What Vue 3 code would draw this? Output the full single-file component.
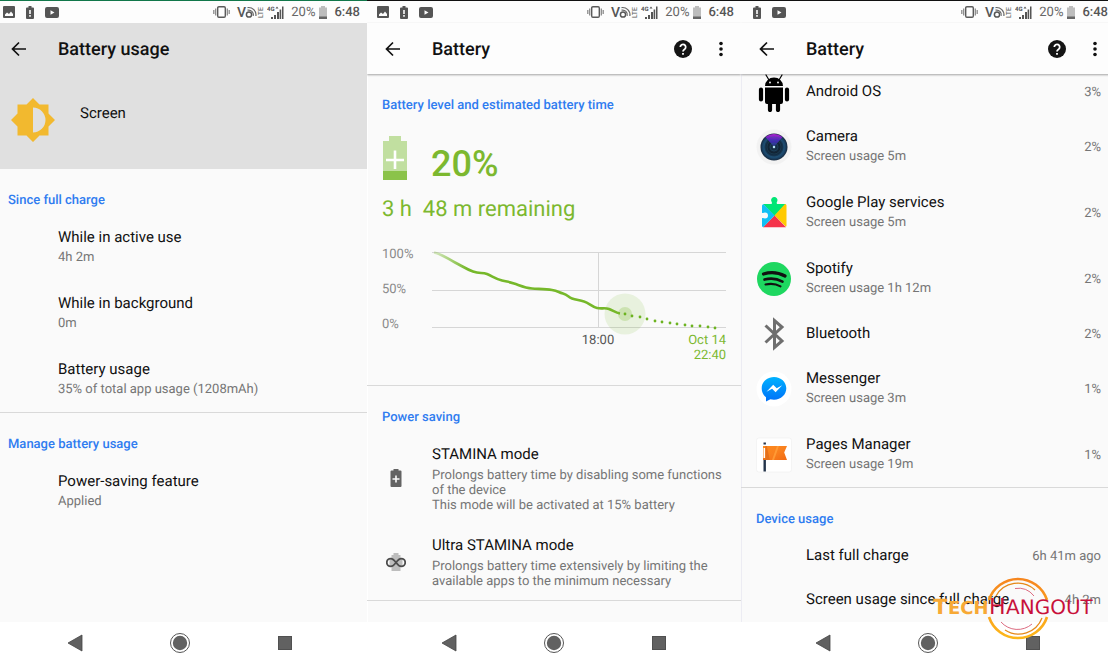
<script setup>
const usageStats = [
  { title: 'While in active use', sub: '4h 2m' },
  { title: 'While in background', sub: '0m' },
  { title: 'Battery usage', sub: '35% of total app usage (1208mAh)' },
]

const modes = [
  {
    title: 'STAMINA mode',
    icon: 'i-stamina',
    lines: ['Prolongs battery time by disabling some functions of the device', 'This mode will be activated at 15% battery'],
  },
  {
    title: 'Ultra STAMINA mode',
    icon: 'i-ultra',
    lines: ['Prolongs battery time extensively by limiting the available apps to the minimum necessary'],
  },
]

const apps = [
  { name: 'Android OS', icon: 'i-android', pct: '3%' },
  { name: 'Camera', sub: 'Screen usage 5m', icon: 'i-camera', pct: '2%' },
  { name: 'Google Play services', sub: 'Screen usage 5m', icon: 'i-play', pct: '2%' },
  { name: 'Spotify', sub: 'Screen usage 1h 12m', icon: 'i-spotify', pct: '2%' },
  { name: 'Bluetooth', icon: 'i-bluetooth', pct: '2%' },
  { name: 'Messenger', sub: 'Screen usage 3m', icon: 'i-messenger', pct: '1%' },
  { name: 'Pages Manager', sub: 'Screen usage 19m', icon: 'i-pages', pct: '1%' },
]

const device = [
  { name: 'Last full charge', value: '6h 41m ago' },
  { name: 'Screen usage since full charge', value: '4h 2m' },
]

const phones = [
  { id: 'usage', title: 'Battery usage', gallery: true, actions: false },
  { id: 'battery', title: 'Battery', gallery: true, actions: true },
  { id: 'apps', title: 'Battery', gallery: false, actions: true },
]

const forecast = [
  [243, 70], [250, 72], [258, 73], [265, 75], [273, 77], [280, 78], [288, 79],
  [295, 80], [303, 81], [310, 82], [318, 82], [326, 83], [333, 84],
]
</script>

<template>
  <svg class="sprite" aria-hidden="true">
    <defs>
      <radialGradient id="lens" cx="50%" cy="50%" r="50%">
        <stop offset="0" stop-color="#9fd4ee" />
        <stop offset=".12" stop-color="#17324a" />
        <stop offset=".5" stop-color="#10202f" />
        <stop offset=".8" stop-color="#1b4a70" />
        <stop offset="1" stop-color="#16283c" />
      </radialGradient>
      <linearGradient id="flare" x1="0" y1="0" x2="0" y2="1">
        <stop offset="0" stop-color="#b01fd0" />
        <stop offset=".5" stop-color="#4526b8" />
        <stop offset="1" stop-color="#1c3f78" />
      </linearGradient>
      <linearGradient id="msg" x1="0" y1="0" x2="0" y2="1">
        <stop offset="0" stop-color="#00b2ff" />
        <stop offset="1" stop-color="#0070f8" />
      </linearGradient>
      <linearGradient id="flag" x1="0" y1="0" x2="1" y2="1">
        <stop offset="0" stop-color="#ff8a1c" />
        <stop offset=".5" stop-color="#f9811f" />
        <stop offset="1" stop-color="#f26a12" />
      </linearGradient>
    </defs>

    <symbol id="i-gallery" viewBox="0 0 12 12">
      <path fill="#555" fill-rule="evenodd" d="M1 0h10a1 1 0 0 1 1 1v10a1 1 0 0 1-1 1H1a1 1 0 0 1-1-1V1a1 1 0 0 1 1-1zM2 10h8V8L8 5.500 6 8 4 6.500 2 8.500z" />
    </symbol>
    <symbol id="i-alert" viewBox="0 0 8 13">
      <path fill="#555" fill-rule="evenodd" d="M2.500 0h3v1.500H7a1 1 0 0 1 1 1V12a1 1 0 0 1-1 1H1a1 1 0 0 1-1-1V2.500a1 1 0 0 1 1-1h1.500zM3.200 4v4h1.600V4zM3.200 9v1.700h1.600V9z" />
    </symbol>
    <symbol id="i-video" viewBox="0 0 14 11">
      <path fill="#555" fill-rule="evenodd" d="M2 0h10a2 2 0 0 1 2 2v7a2 2 0 0 1-2 2H2a2 2 0 0 1-2-2V2a2 2 0 0 1 2-2zM5.500 3.200v4.600l4-2.300z" />
    </symbol>
    <symbol id="i-vibrate" viewBox="0 0 17 12">
      <rect x="4.700" y="0.700" width="7.600" height="10.600" rx="1.200" fill="none" stroke="#5a5a5a" stroke-width="1.400" />
      <path d="M2.700 2.500v7M14.300 2.500v7M.8 4v4M16.200 4v4" stroke="#8a8a8a" stroke-width="1.300" />
    </symbol>
    <symbol id="i-cell" viewBox="0 0 8 13">
      <path fill="#bdbdbd" d="M2 0h4v1.500h2V13H0V1.500h2z" />
      <path fill="#666" d="M0 10.500h8V13H0z" />
    </symbol>
    <symbol id="i-back" viewBox="0 0 16 16">
      <path d="M15 8H2M8 1.500L1.500 8 8 14.500" fill="none" stroke="#111" stroke-width="1.700" />
    </symbol>
    <symbol id="i-help" viewBox="0 0 18 18">
      <circle cx="9" cy="9" r="9" fill="#151515" />
      <path d="M6.300 7a2.700 2.700 0 1 1 4.300 2.200C9.500 10 9 10.400 9 11.600" fill="none" stroke="#fff" stroke-width="1.800" />
      <path d="M8.100 13h1.800v1.800H8.100z" fill="#fff" />
    </symbol>
    <symbol id="i-more" viewBox="0 0 4 16">
      <circle cx="2" cy="2.500" r="1.800" fill="#111" /><circle cx="2" cy="8" r="1.800" fill="#111" /><circle cx="2" cy="13.500" r="1.800" fill="#111" />
    </symbol>
    <symbol id="i-brightness" viewBox="0 0 44 44">
      <path fill="#f2b92f" fill-rule="evenodd" d="M22 0l6.500 6.500h9v9L44 22l-6.500 6.500v9h-9L22 44l-6.500-6.500h-9v-9L0 22l6.500-6.500v-9h9zM22 9.500v25a12.500 12.500 0 0 0 0-25z" />
    </symbol>
    <symbol id="i-stamina" viewBox="0 0 20 20">
      <path fill="#636363" fill-rule="evenodd" d="M7.500 1h5v1.500h2a1 1 0 0 1 1 1V18a1 1 0 0 1-1 1h-9a1 1 0 0 1-1-1V3.500a1 1 0 0 1 1-1h2zM9.200 7.500v2.700H6.500v1.600h2.700v2.700h1.600v-2.700h2.700v-1.600h-2.700V7.500z" />
    </symbol>
    <symbol id="i-ultra" viewBox="0 0 20 20">
      <path fill="#bdbdbd" d="M7.500 1h5v2h2v2.500l2 1.500v8h-2v4h-9v-4h-2V7l2-1.500V3h2z" />
      <path d="M10 10.500C8.500 8.400 7 6.600 4.700 6.600a3.900 3.900 0 0 0 0 7.800c2.300 0 3.800-1.800 5.300-3.900s3-3.900 5.300-3.900a3.900 3.900 0 0 1 0 7.800c-2.300 0-3.800-1.800-5.300-3.900z" fill="none" stroke="#4c4c4c" stroke-width="1.800" />
    </symbol>

    <symbol id="i-android" viewBox="0 0 36 40">
      <path d="M10 3l3 5M26 3l-3 5" stroke="#000" stroke-width="1.200" stroke-linecap="round" />
      <path d="M9 14a9 8.500 0 0 1 18 0zM9 15.500h18V30a2 2 0 0 1-2 2H11a2 2 0 0 1-2-2z" />
      <path d="M5 17.500v10M31 17.500v10M14 31v7M22 31v7" stroke="#000" stroke-width="4.200" stroke-linecap="round" />
      <circle cx="14" cy="10.500" r=".9" fill="#fff" /><circle cx="22" cy="10.500" r=".9" fill="#fff" />
    </symbol>
    <symbol id="i-camera" viewBox="0 0 36 36">
      <circle cx="18" cy="18" r="17.500" fill="#f2f2f2" />
      <circle cx="18" cy="18" r="13.500" fill="url(#lens)" />
      <path d="M18 18L9.500 8a13.500 13.500 0 0 1 17 0z" fill="url(#flare)" />
      <g fill="none" stroke="#2e6486" stroke-opacity=".6" stroke-width=".6"><circle cx="18" cy="18" r="4" /><circle cx="18" cy="18" r="7" /><circle cx="18" cy="18" r="10" /></g>
      <circle cx="18" cy="18" r="1.200" fill="#b9e4f5" />
    </symbol>
    <symbol id="i-play" viewBox="0 0 36 36">
      <path fill="#00e676" d="M7 9h8.500c1-1 .2-2-.3-3a3.200 3.200 0 1 1 6.200 0c-.5 1-1.200 2-.3 3H30L18.500 21z" />
      <path fill="#ffca00" d="M29 9a1.500 1.500 0 0 1 1.500 1.500v20a1.500 1.500 0 0 1-.6 1.200L18.500 20.500z" />
      <path fill="#f5334a" d="M18.500 20.500L30 32.300H7z" />
      <path fill="#12bff5" d="M7.500 9.200L18.500 20.500 7.200 32.300a1.500 1.500 0 0 1-1.200-1.500v-7.500c1-.8 2 0 3 .2a3 3 0 1 0 0-6c-1 .2-2 1-3 .2v-7A1.500 1.500 0 0 1 7.500 9.200z" />
    </symbol>
    <symbol id="i-spotify" viewBox="0 0 36 36">
      <circle cx="18" cy="18" r="17" fill="#1ed760" />
      <path d="M7.500 13c7-2.200 15-1.500 21.500 2" fill="none" stroke="#111" stroke-width="3.200" stroke-linecap="round" />
      <path d="M8.500 18.600c6-1.700 12.500-1 18 2" fill="none" stroke="#111" stroke-width="2.600" stroke-linecap="round" />
      <path d="M9.500 23.500c5-1.200 10.500-.7 15 1.800" fill="none" stroke="#111" stroke-width="2.100" stroke-linecap="round" />
    </symbol>
    <symbol id="i-bluetooth" viewBox="0 0 36 36">
      <path d="M9.500 9.500L26 25 18.500 31.500V4.500L26 11 9.500 26.500" fill="none" stroke="#6e6e6e" stroke-width="3" />
    </symbol>
    <symbol id="i-messenger" viewBox="0 0 36 36">
      <circle cx="18" cy="18" r="17.500" fill="#fff" />
      <path fill="url(#msg)" d="M18 6c7 0 12.300 5 12.300 11.300S25 28.800 18 28.800c-1.300 0-2.500-.2-3.600-.5L10 30.500v-4.200c-2.700-2-4.300-5.200-4.300-9C5.700 11 11 6 18 6z" />
      <path fill="#fff" d="M10.500 20.800l6.700-7 3.500 3.400 5.500-3-6.600 7-3.500-3.400z" />
    </symbol>
    <symbol id="i-pages" viewBox="0 0 36 36">
      <rect x=".5" y="1" width="35" height="34" rx="2.500" fill="#fff" stroke="#eee" stroke-width=".6" />
      <path fill="#24344a" d="M7.500 5.500h2.400v2H7.500zM7.500 9.500h2.400V34.500H7.500z" />
      <path fill="url(#flag)" d="M7 9h24l-2.800 6.500L31 23H7z" />
      <path fill="#fff" d="M7.500 11h1.800v10H7.500z" />
      <path fill="#e5701a" d="M9.300 9h1.500l3 14H7v-1.500h2.300z" />
      <path fill="#ff9a35" d="M16 23l5-14h2l-5 14z" />
    </symbol>
  </svg>

  <main class="board">
    <section v-for="phone in phones" :key="phone.id" class="frame" :class="phone.id">
      <div class="phone">
        <div class="status">
          <div class="notes">
            <svg v-if="phone.gallery" class="s-gallery"><use href="#i-gallery" /></svg>
            <svg class="s-cell"><use href="#i-alert" /></svg>
            <svg class="s-video"><use href="#i-video" /></svg>
          </div>
          <div class="system">
            <svg class="s-vibrate"><use href="#i-vibrate" /></svg>
            <svg class="s-volte" viewBox="0 0 28 16">
              <text x="0" y="13" font-size="14" font-weight="500" fill="#555">V</text>
              <circle cx="12" cy="10.500" r="2.600" fill="none" stroke="#555" stroke-width="1.500" />
              <path d="M10.500 6.200a4.700 4.700 0 0 1 5.700 5.600M10.500 3.600a7.400 7.400 0 0 1 8.400 8.400" fill="none" stroke="#666" stroke-width="1.200" />
              <text x="-14" y="26" transform="rotate(-90)" font-size="7" fill="#555">LTE</text>
            </svg>
            <svg class="s-signal" viewBox="0 0 17 15">
              <text x="0" y="6" font-size="6" fill="#555" font-weight="700">4G</text>
              <path fill="#555" d="M8.500 3.500l1.500-2 1.500 2zM4 12h2v2H4zM7 10h2v4H7zM10 7h2v7h-2zM12.600 4.500h1.600V14h-1.600zM15 1.500h1.500V14H15z" />
            </svg>
            <span class="level">20%</span>
            <svg class="s-cell"><use href="#i-cell" /></svg>
            <span class="clock">6:48</span>
          </div>
        </div>

        <header class="appbar">
          <button type="button" class="icon-btn" aria-label="Back"><svg class="a-back"><use href="#i-back" /></svg></button>
          <h1>{{ phone.title }}</h1>
          <template v-if="phone.actions">
            <button type="button" class="icon-btn help" aria-label="Help"><svg class="a-help"><use href="#i-help" /></svg></button>
            <button type="button" class="icon-btn" aria-label="More options"><svg class="a-more"><use href="#i-more" /></svg></button>
          </template>
        </header>

        <div v-if="phone.id === 'usage'" class="content">
          <div class="subject">
            <svg><use href="#i-brightness" /></svg>
            <span class="title">Screen</span>
          </div>
          <h2>Since full charge</h2>
          <ul>
            <li v-for="s in usageStats" :key="s.title" class="row indent">
              <div class="text"><span class="title">{{ s.title }}</span><span class="sub">{{ s.sub }}</span></div>
            </li>
          </ul>
          <div class="divided">
            <h2>Manage battery usage</h2>
            <div class="row indent">
              <div class="text"><span class="title">Power-saving feature</span><span class="sub">Applied</span></div>
            </div>
          </div>
        </div>

        <div v-else-if="phone.id === 'battery'" class="content">
          <h2>Battery level and estimated battery time</h2>
          <div class="hero">
            <svg viewBox="0 0 24 44">
              <path fill="#c1dfa0" d="M6 0h12v5h6v30H0V5h6z" />
              <path fill="#8bc34a" d="M0 35h24v9H0z" />
              <path d="M12 14.500v18.500M3 24h18" stroke="#fff" stroke-width="2.600" />
            </svg>
            <span>20%</span>
          </div>
          <p class="remaining">3 h&nbsp; 48 m remaining</p>
          <svg class="chart" viewBox="0 0 345 120" role="img" aria-label="Battery level over time">
            <defs>
              <linearGradient id="fade" gradientUnits="userSpaceOnUse" x1="51" y1="0" x2="85" y2="0">
                <stop offset="0" stop-color="#76b82a" stop-opacity=".25" />
                <stop offset="1" stop-color="#76b82a" />
              </linearGradient>
            </defs>
            <path d="M50 8.500h294M50 46.500h294M50 83.500h294M216.500 8v76" stroke="#d6d6d6" fill="none" />
            <circle cx="243" cy="70" r="20.500" fill="#76b82a" fill-opacity=".13" />
            <circle cx="243" cy="70" r="7" fill="#76b82a" fill-opacity=".25" />
            <path d="M52 8.500C60 10 66 15 73 18.500S84 25 91 27.500 100 28 105 30 114 35 120 36.500 126 37.500 132 39.500 143 44 150 44.500 164 45 170 46 176 48 181 49.500 186 53 190 54.500 197 56 202 57.500 210 63 215 64 223 63.500 227 65 234 69 238 69.500" fill="none" stroke="url(#fade)" stroke-width="2.600" />
            <circle v-for="(d, i) in forecast" :key="i" :cx="d[0]" :cy="d[1]" r="1.400" fill="#6cb320" />
            <g fill="#8a8a8a">
              <text x="0" y="14">100%</text><text x="0" y="49">50%</text><text x="0" y="84">0%</text>
            </g>
            <text x="216" y="100" text-anchor="middle" fill="#555">18:00</text>
            <g fill="#7cb82f" text-anchor="end"><text x="344" y="100">Oct 14</text><text x="344" y="115">22:40</text></g>
          </svg>
          <div class="divided">
            <h2>Power saving</h2>
            <ul class="modes">
              <li v-for="m in modes" :key="m.title" class="row mode">
                <svg class="mode-icon"><use :href="'#' + m.icon" /></svg>
                <div class="text">
                  <span class="title">{{ m.title }}</span>
                  <span v-for="l in m.lines" :key="l" class="sub">{{ l }}</span>
                </div>
              </li>
            </ul>
            <div class="divided"></div>
          </div>
        </div>

        <div v-else class="content scrolled">
          <ul>
            <li v-for="a in apps" :key="a.name" class="row app" :class="{ single: !a.sub }">
              <svg class="app-icon"><use :href="'#' + a.icon" /></svg>
              <div class="text"><span class="title">{{ a.name }}</span><span v-if="a.sub" class="sub">{{ a.sub }}</span></div>
              <span class="value">{{ a.pct }}</span>
            </li>
          </ul>
          <div class="divided">
            <h2>Device usage</h2>
            <ul>
              <li v-for="d in device" :key="d.name" class="row indent single">
                <div class="text"><span class="title">{{ d.name }}</span></div>
                <span class="value">{{ d.value }}</span>
              </li>
            </ul>
          </div>
        </div>

        <nav class="navbar" aria-label="System navigation">
          <button type="button" class="icon-btn" aria-label="Back"><svg viewBox="0 0 20 20"><path fill="#616161" stroke="#444" stroke-width=".8" d="M17 2v16L3 10z" /></svg></button>
          <button type="button" class="icon-btn" aria-label="Home"><svg viewBox="0 0 20 20"><circle cx="10" cy="10" r="9.500" fill="#fff" stroke="#555" /><circle cx="10" cy="10" r="7.200" fill="#616161" /></svg></button>
          <button type="button" class="icon-btn" aria-label="Recent apps"><svg viewBox="0 0 20 20"><rect x="3.500" y="3.500" width="13" height="13" fill="#616161" stroke="#505050" /></svg></button>
        </nav>
      </div>
    </section>

    <svg class="watermark" viewBox="0 0 166 66" role="img" aria-label="TechHangout">
      <defs>
        <linearGradient id="ring" x1="0" y1="0" x2="0" y2="1">
          <stop offset="0" stop-color="#f6861f" />
          <stop offset="1" stop-color="#fdb71a" />
        </linearGradient>
      </defs>
      <g fill="none" stroke-linecap="butt">
        <path d="M57 24A30.500 30.500 0 0 1 115 24M115 41A30.500 30.500 0 0 1 57 41" stroke="url(#ring)" stroke-width="2.600" />
        <path d="M64 20A25 25 0 0 1 103 14M110 42A25 25 0 0 1 73 54" stroke="#e58a1a" stroke-width="1.300" />
        <path d="M83 12.500A20 20 0 0 1 102 20M69 46A22 22 0 0 0 100 48" stroke="#d85a72" stroke-width=".9" />
      </g>
      <g class="brand">
        <g fill="#f7a935" font-weight="700"><text x="1" y="38" font-size="21">T</text><text x="16" y="38" font-size="18">ECH</text></g>
        <g fill="#c8103a"><text x="57" y="38" font-size="22">H</text><text x="74" y="38" font-size="20">ANGOUT</text></g>
      </g>
    </svg>
  </main>
</template>

<style>
body {
  margin: 0;
  background: #fafafa;
}
</style>

<style scoped>
.sprite {
  position: absolute;
  width: 0;
  height: 0;
}
.board {
  position: relative;
  display: grid;
  grid-template-columns: 367fr 374fr 367fr;
  min-height: 100vh;
  overflow: hidden;
  font-family: Roboto, "Noto Sans", sans-serif;
  text-rendering: geometricPrecision;
  color: #111;
}
.frame {
  display: flex;
  min-width: 0;
  overflow: hidden;
}
.phone {
  flex: 1;
  display: flex;
  flex-direction: column;
  min-width: 0;
  background: #fafafa;
}
.usage .phone {
  margin-left: -7px;
}
.apps .phone {
  margin-right: -7px;
  box-shadow: inset 1px 0 #ececf3;
}
.battery .phone {
  box-shadow: inset 1px 0 #fff;
}
.status {
  display: flex;
  justify-content: space-between;
  align-items: center;
  height: 22px;
  padding: 0 7px 0 10px;
  border-top: 1px solid #111;
  background: #fdfdfd;
}
.usage .status {
  border-color: #11774a;
}
.apps .status {
  padding-left: 12px;
}
.notes,
.system {
  display: flex;
  align-items: center;
}
.notes {
  gap: 11px;
}
.system {
  gap: 7px;
  font-size: 13px;
  line-height: 16px;
  color: #666;
}
.level,
.clock {
  padding-top: 2px;
}
.level {
  margin-right: -3px;
}
.clock {
  font-weight: 500;
  color: #555;
}
.s-gallery { width: 12px; height: 12px; }
.s-cell { width: 8px; height: 13px; }
.s-video { width: 14px; height: 11px; }
.s-vibrate { width: 17px; height: 12px; }
.s-volte { width: 28px; height: 16px; margin-right: -5px; overflow: visible; }
.s-signal { width: 17px; height: 15px; }

.appbar {
  position: relative;
  z-index: 1;
  display: flex;
  align-items: center;
  box-sizing: border-box;
  height: 51px;
  padding: 0 18px;
  background: #fdfdfd;
  box-shadow: 0 1px 2px rgba(0, 0, 0, 0.35);
}
.usage .appbar {
  background: #e0e0e0;
  box-shadow: none;
}
h1 {
  flex: 1;
  margin: 0 0 0 31px;
  padding-top: 2px;
  font-size: 18px;
  line-height: 24px;
  font-weight: 500;
}
.icon-btn {
  display: flex;
  padding: 0;
  border: 0;
  background: none;
}
.help {
  margin-right: 27px;
}
.a-back { width: 16px; height: 16px; }
.a-help { width: 18px; height: 18px; }
.a-more { width: 4px; height: 16px; }

.content {
  flex: 1;
}
.scrolled {
  margin-top: -5px;
}
ul {
  margin: 0;
  padding: 0;
  list-style: none;
}
h2 {
  box-sizing: border-box;
  height: 45px;
  margin: 0;
  padding: 23px 14px 0 15px;
  font-size: 13px;
  line-height: 18px;
  font-weight: 500;
  color: #2f7cf0;
}
.divided {
  border-top: 1px solid #d9d9d9;
}
.subject {
  display: flex;
  gap: 25px;
  box-sizing: border-box;
  height: 95px;
  padding: 24px 18px 0;
  background: #e0e0e0;
}
.subject svg {
  width: 44px;
  height: 44px;
}
.subject .title {
  padding-top: 4px;
}
.row {
  display: flex;
  align-items: center;
  box-sizing: border-box;
  min-height: 66px;
  padding: 0 14px 0 15px;
}
.indent {
  padding-left: 65px;
}
.single {
  min-height: 44px;
}
.text {
  flex: 1;
  display: flex;
  flex-direction: column;
}
.title {
  font-size: 15px;
  line-height: 22px;
}
.sub {
  font-size: 13px;
  line-height: 20px;
  color: #757575;
}
.value {
  padding-top: 2px;
  font-size: 13px;
  color: #757575;
}
.app-icon {
  width: 36px;
  height: 36px;
  margin: 2px 14px 0 0;
}
.single .app-icon {
  height: 40px;
}
.modes {
  padding: 1px 0;
}
.mode {
  padding: 11px 14px 10px 19px;
  min-height: 0;
}
.mode .sub {
  line-height: 15px;
}
.mode .title {
  margin-bottom: 3px;
}
.mode-icon {
  width: 20px;
  height: 20px;
  margin-right: 26px;
}
.hero {
  display: flex;
  gap: 24px;
  padding: 17px 16px 0;
  font-size: 36px;
  line-height: 44px;
  font-weight: 500;
  color: #7cb82f;
}
.hero svg {
  width: 24px;
  height: 44px;
}
.hero span {
  padding-top: 6px;
}
.remaining {
  margin: 10px 14px 20px 15px;
  font-size: 22px;
  line-height: 28px;
  color: #7cb82f;
}
.chart {
  display: block;
  width: calc(100% - 29px);
  margin: 0 14px 21px 15px;
  font-size: 13px;
}
.navbar {
  display: flex;
  justify-content: center;
  align-items: center;
  gap: 85px;
  height: 42px;
  background: #fff;
}
.navbar svg {
  width: 20px;
  height: 20px;
}
.watermark {
  position: absolute;
  right: 10px;
  bottom: 22px;
  width: 166px;
  height: 66px;
  pointer-events: none;
}
.brand {
  font-family: "DejaVu Sans", sans-serif;
}
</style>
